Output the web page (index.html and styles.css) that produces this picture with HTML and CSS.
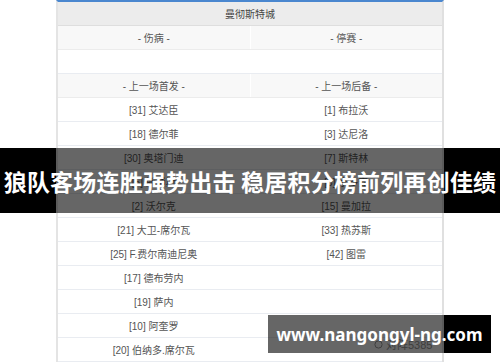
FILE: index.html
```html
<!DOCTYPE html>
<html lang="zh">
<head>
<meta charset="utf-8">
<link rel="stylesheet" href="styles.css">
</head>
<body>
<div class="page">
  <div class="lineup">
    <div class="row head">曼彻斯特城</div>
    <div class="row sub"><div class="cell">- 伤病 -</div><div class="cell">- 停赛 -</div></div>
    <div class="row"><div class="cell"></div><div class="cell"></div></div>
    <div class="row sub"><div class="cell">- 上一场首发 -</div><div class="cell">- 上一场后备 -</div></div>
    <div class="row"><div class="cell">[31] 艾达臣</div><div class="cell">[1] 布拉沃</div></div>
    <div class="row"><div class="cell">[18] 德尔菲</div><div class="cell">[3] 达尼洛</div></div>
    <div class="row"><div class="cell">[30] 奥塔门迪</div><div class="cell">[7] 斯特林</div></div>
    <div class="row"><div class="cell">[5] 斯通斯</div><div class="cell">[8] 京多安</div></div>
    <div class="row"><div class="cell">[2] 沃尔克</div><div class="cell">[15] 曼加拉</div></div>
    <div class="row"><div class="cell">[21] 大卫-席尔瓦</div><div class="cell">[33] 热苏斯</div></div>
    <div class="row"><div class="cell">[25] F.费尔南迪尼奥</div><div class="cell">[42] 图雷</div></div>
    <div class="row"><div class="cell">[17] 德布劳内</div><div class="cell"></div></div>
    <div class="row"><div class="cell">[19] 萨内</div><div class="cell"></div></div>
    <div class="row"><div class="cell">[10] 阿奎罗</div><div class="cell"></div></div>
    <div class="row"><div class="cell">[20] 伯纳多.席尔瓦</div><div class="cell"></div></div>
  </div>
  <div class="mark"><svg width="9" height="9" viewBox="0 0 9 9"><circle cx="4.5" cy="4.5" r="3.6" fill="none" stroke="#999" stroke-width="1"/></svg><span>对阵5385</span></div>
  <div class="banner b1">狼队客场连胜强势出击 稳居积分榜前列再创佳绩</div>
  <div class="banner b2">www.nangongyl-ng.com</div>
</div>
</body>
</html>
```
FILE: styles.css
```css
* { box-sizing: border-box; }
html, body { margin: 0; padding: 0; background: #fff; }
.page {
  position: relative;
  width: 500px;
  height: 362px;
  overflow: hidden;
  font-family: "Liberation Sans", "Noto Sans CJK SC", sans-serif;
}
.lineup {
  width: 388px;
  margin: 0 auto;
  border-top: 2px solid #4a87cf;
  border-left: 2px solid #e4e4e4;
  border-right: 2px solid #e0e0e0;
  font-size: 10px;
  color: #555;
}
.row {
  display: grid;
  grid-template-columns: 1fr 1fr;
  column-gap: 1px;
  height: 24px;
  border-bottom: 1px solid #e9ecf1;
  background: #fff;
}
.cell {
  display: flex;
  align-items: center;
  justify-content: center;
  background: #fff;
}
.row.head {
  display: flex;
  align-items: center;
  justify-content: center;
  background: #ececec;
  border-bottom: 1px solid #dedede;
  color: #444;
}
.row.sub { background: #fff; border-bottom: 1px solid #ececec; }
.row.sub .cell { background: #f8f8f8; }
.mark {
  position: absolute;
  left: 374px;
  top: 336px;
  display: flex;
  align-items: center;
  gap: 3px;
  font-size: 11px;
  color: #999;
}
.banner {
  position: absolute;
  display: flex;
  align-items: center;
  justify-content: center;
  color: #fff;
  font-weight: bold;
  font-family: "Noto Sans CJK SC", "Noto Sans", sans-serif;
  white-space: nowrap;
}
.b1 {
  left: 0;
  top: 148px;
  width: 500px;
  height: 65px;
  font-size: 23px;
  letter-spacing: 0.2px;
  background: linear-gradient(to right, #000 56px, rgba(0,0,0,0.6) 56px, rgba(0,0,0,0.6) 444px, #000 444px);
}
.b2 {
  left: 268px;
  top: 315px;
  width: 223px;
  height: 38px;
  font-size: 17px;
  font-family: "Noto Sans", "Liberation Sans", sans-serif;
  background: linear-gradient(to right, rgba(0,0,0,0.6) 176px, #000 176px);
}
```
